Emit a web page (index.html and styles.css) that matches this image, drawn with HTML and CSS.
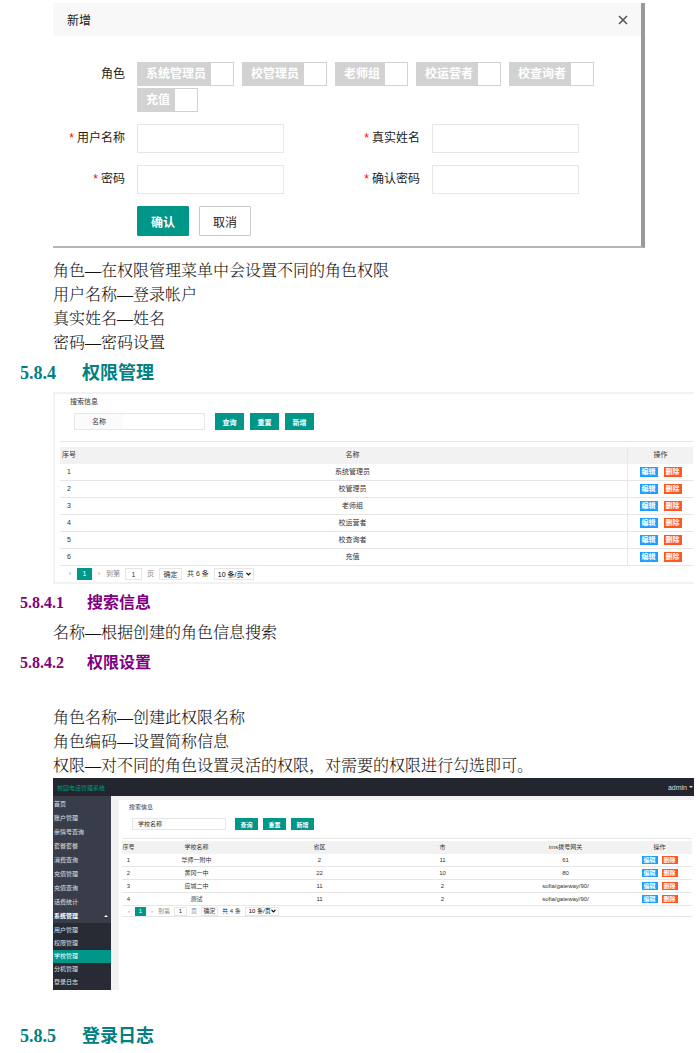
FILE: index.html
```html
<!DOCTYPE html>
<html lang="zh-CN">
<head>
    <meta charset="UTF-8">
    <meta name="viewport" content="width=device-width, initial-scale=1.0">
    <title>权限管理</title>
    <link rel="stylesheet" href="styles.css">
</head>
<body>
<main class="doc">

    <!-- 新增用户 -->
    <section class="dialog">
        <header class="dialog-title">
            <span>新增</span>
            <button class="dialog-close" type="button" aria-label="关闭">
                <svg width="10" height="10" viewBox="0 0 10 10"><path d="M1 1L9 9M9 1L1 9" stroke="#555" stroke-width="1.6" fill="none"/></svg>
            </button>
        </header>
        <form class="dialog-form">
            <span class="form-label">角色</span>
            <div class="switches">
                <label class="switch"><span>系统管理员</span><input type="checkbox"></label>
                <label class="switch"><span>校管理员</span><input type="checkbox"></label>
                <label class="switch"><span>老师组</span><input type="checkbox"></label>
                <label class="switch"><span>校运营者</span><input type="checkbox"></label>
                <label class="switch"><span>校查询者</span><input type="checkbox"></label>
                <label class="switch"><span>充值</span><input type="checkbox"></label>
            </div>
            <label class="form-label required" for="username">用户名称</label>
            <input class="form-input" id="username" type="text">
            <label class="form-label required" for="realname">真实姓名</label>
            <input class="form-input" id="realname" type="text">
            <label class="form-label required" for="pwd">密码</label>
            <input class="form-input" id="pwd" type="password">
            <label class="form-label required" for="pwd2">确认密码</label>
            <input class="form-input" id="pwd2" type="password">
            <div class="form-buttons">
                <button class="btn-ok" type="button">确认</button>
                <button class="btn-cancel" type="button">取消</button>
            </div>
        </form>
    </section>

    <div class="text text-first">
        <p>角色—在权限管理菜单中会设置不同的角色权限</p>
        <p>用户名称—登录帐户</p>
        <p>真实姓名—姓名</p>
        <p>密码—密码设置</p>
    </div>

    <h2><span class="num">5.8.4</span>权限管理</h2>

    <!-- 权限列表 -->
    <section class="panel">
        <div class="legend">搜索信息</div>
        <form class="search">
            <div class="search-box">
                <label for="role-name">名称</label>
                <input id="role-name" type="text">
            </div>
            <button type="button">查询</button>
            <button type="button">重置</button>
            <button type="button">新增</button>
        </form>
        <table class="grid">
            <thead>
                <tr><th class="col-no">序号</th><th>名称</th><th class="col-op">操作</th></tr>
            </thead>
            <tbody>
                <tr><td>1</td><td>系统管理员</td><td><button class="edit" type="button">编辑</button><button class="del" type="button">删除</button></td></tr>
                <tr><td>2</td><td>校管理员</td><td><button class="edit" type="button">编辑</button><button class="del" type="button">删除</button></td></tr>
                <tr><td>3</td><td>老师组</td><td><button class="edit" type="button">编辑</button><button class="del" type="button">删除</button></td></tr>
                <tr><td>4</td><td>校运营者</td><td><button class="edit" type="button">编辑</button><button class="del" type="button">删除</button></td></tr>
                <tr><td>5</td><td>校查询者</td><td><button class="edit" type="button">编辑</button><button class="del" type="button">删除</button></td></tr>
                <tr><td>6</td><td>充值</td><td><button class="edit" type="button">编辑</button><button class="del" type="button">删除</button></td></tr>
            </tbody>
        </table>
        <div class="pager">
            <a class="arrow" href="#">‹</a>
            <span class="current">1</span>
            <a class="arrow" href="#">›</a>
            <label for="page-a">到第</label>
            <input id="page-a" type="text" value="1">
            <span class="unit">页</span>
            <button type="button">确定</button>
            <span class="total">共 6 条</span>
            <span class="page-size">
                <select aria-label="每页条数"><option>10 条/页</option><option>20 条/页</option></select>
                <svg width="5" height="4" viewBox="0 0 5 4"><path d="M0.5 0.8L2.5 2.8L4.5 0.8" stroke="#000" stroke-width="1.2" fill="none"/></svg>
            </span>
        </div>
    </section>

    <h3><span class="num">5.8.4.1</span>搜索信息</h3>
    <div class="text">
        <p>名称—根据创建的角色信息搜索</p>
    </div>
    <h3><span class="num">5.8.4.2</span>权限设置</h3>
    <div class="text text-spaced">
        <p>角色名称—创建此权限名称</p>
        <p>角色编码—设置简称信息</p>
        <p>权限—对不同的角色设置灵活的权限，对需要的权限进行勾选即可。</p>
    </div>

    <!-- 学校管理 -->
    <section class="admin">
        <header class="topbar">
            <span class="logo">校园电话管理系统</span>
            <a class="user" href="#">admin</a>
        </header>
        <div class="admin-body">
            <nav class="side">
                <a href="#">首页</a>
                <a href="#">账户管理</a>
                <a href="#">亲情号查询</a>
                <a href="#">套餐套餐</a>
                <a href="#">消费查询</a>
                <a href="#">充值管理</a>
                <a href="#">充值查询</a>
                <a href="#">话费统计</a>
                <a class="open" href="#">系统管理</a>
                <div class="sub">
                    <a href="#">用户管理</a>
                    <a href="#">权限管理</a>
                    <a class="active" href="#">学校管理</a>
                    <a href="#">分机管理</a>
                    <a href="#">登录日志</a>
                </div>
            </nav>
            <div class="card">
                <div class="legend">搜索信息</div>
                <form class="search">
                    <div class="search-box">
                        <label for="school-name">学校名称</label>
                        <input id="school-name" type="text">
                    </div>
                    <button type="button">查询</button>
                    <button type="button">重置</button>
                    <button type="button">新增</button>
                </form>
                <table class="grid">
                    <thead>
                        <tr><th class="col-no">序号</th><th>学校名称</th><th>省区</th><th>市</th><th>ims拨号网关</th><th class="col-op">操作</th></tr>
                    </thead>
                    <tbody>
                        <tr><td>1</td><td>华师一附中</td><td>2</td><td>11</td><td>61</td><td><button class="edit" type="button">编辑</button><button class="del" type="button">删除</button></td></tr>
                        <tr><td>2</td><td>黄冈一中</td><td>22</td><td>10</td><td>80</td><td><button class="edit" type="button">编辑</button><button class="del" type="button">删除</button></td></tr>
                        <tr><td>3</td><td>应城二中</td><td>11</td><td>2</td><td>sofia/gateway/90/</td><td><button class="edit" type="button">编辑</button><button class="del" type="button">删除</button></td></tr>
                        <tr><td>4</td><td>测试</td><td>11</td><td>2</td><td>sofia/gateway/90/</td><td><button class="edit" type="button">编辑</button><button class="del" type="button">删除</button></td></tr>
                    </tbody>
                </table>
                <div class="pager">
                    <a class="arrow" href="#">‹</a>
                    <span class="current">1</span>
                    <a class="arrow" href="#">›</a>
                    <label for="page-b">到第</label>
                    <input id="page-b" type="text" value="1">
                    <span class="unit">页</span>
                    <button type="button">确定</button>
                    <span class="total">共 4 条</span>
                    <span class="page-size">
                        <select aria-label="每页条数"><option>10 条/页</option><option>20 条/页</option></select>
                        <svg width="5" height="4" viewBox="0 0 5 4"><path d="M0.5 0.8L2.5 2.8L4.5 0.8" stroke="#000" stroke-width="1.2" fill="none"/></svg>
                    </span>
                </div>
            </div>
        </div>
    </section>

    <h2 class="last"><span class="num">5.8.5</span>登录日志</h2>
</main>
</body>
</html>
```
FILE: styles.css
```css
:root {
    --teal: #009688;
    --blue: #1e9fff;
    --red: #ff5722;
    --line: #e6e6e6;
    --ui: "Liberation Sans", "Noto Sans CJK SC", sans-serif;
}

* {
    box-sizing: border-box;
}

body {
    margin: 0;
    background: #fff;
    color: #333;
    font-family: var(--ui);
}

a {
    color: inherit;
    text-decoration: none;
}

button, input, select {
    margin: 0;
    padding: 0;
    border: 0;
    border-radius: 0;
    font-family: inherit;
    font-size: inherit;
    color: inherit;
    background: none;
}

.doc {
    padding: 3px 6px 0 20px;
}

/* document text */
.text {
    margin: 6px 0 6px 33px;
    color: #111;
    font-family: "Liberation Serif", "Noto Serif CJK SC", "Noto Sans CJK SC", serif;
    font-size: 16px;
    font-weight: 300;
    line-height: 24px;
}

.text p { margin: 0; }
.text-first { margin: 11px 0 0 33px; }
.text-spaced { margin: 31px 0 0 33px; }

h2, h3 {
    display: flex;
    margin: 0;
    font-family: "Liberation Serif", "Noto Sans CJK SC", serif;
    font-weight: bold;
}

h2 {
    font-size: 18px;
    line-height: 37px;
    color: #008080;
}

h3 {
    font-size: 16px;
    line-height: 24px;
    color: #800080;
}

h2 .num { width: 62px; }
h3 .num { width: 67px; }
h2.last { margin-top: 28px; }

/* dialog */
.dialog {
    margin: 0 49px 0 33px;
    border-right: 4px solid #999;
    border-bottom: 2px solid #b5b5b5;
    font-size: 12px;
    color: #222;
}

.dialog-title {
    display: flex;
    justify-content: space-between;
    align-items: center;
    height: 33px;
    padding: 0 13px 0 14px;
    background: #f8f8f8;
}

.dialog-close {
    display: flex;
}

.dialog-form {
    display: grid;
    grid-template-columns: 72px 1fr 124px 1fr;
    column-gap: 12px;
    row-gap: 12px;
    padding: 26px 62px 10px 0;
}

.form-label {
    line-height: 29px;
    text-align: right;
}

.dialog-form .form-label:first-child {
    line-height: 24px;
}

.required::before {
    content: "*";
    margin-right: 3px;
    color: #f00;
}

.form-input {
    width: 100%;
    height: 29px;
    padding: 0 6px;
    border: 1px solid var(--line);
}

.switches {
    grid-column: 2 / -1;
    display: flex;
    flex-wrap: wrap;
    gap: 2px 8px;
    margin-right: -20px;
}

.switch {
    display: flex;
    height: 24px;
    border: 1px solid #d2d2d2;
    background: #d2d2d2;
    color: #fff;
    font-weight: bold;
    line-height: 22px;
}

.switch span {
    padding: 0 5px 0 8px;
}

.switch input {
    appearance: none;
    width: 22px;
    height: 22px;
    background: #fff;
}

.form-buttons {
    grid-column: 2 / -1;
    display: flex;
    gap: 10px;
}

.form-buttons button {
    height: 30px;
    padding: 0 13px;
    border: 1px solid #c9c9c9;
    border-radius: 1px;
}

.form-buttons .btn-ok {
    border-color: var(--teal);
    background: var(--teal);
    color: #fff;
    font-weight: bold;
}

/* list panel */
.panel {
    margin: 0 0 7px 33px;
    padding: 3px 1px 0 5px;
    border: 2px solid #f2f2f2;
    border-right: 0;
    font-size: 7px;
}

.legend {
    padding-left: 10px;
    line-height: 10px;
}

.search {
    display: flex;
    gap: 6px;
    margin-bottom: 5px;
    padding: 6px 0 11px 14px;
    border-bottom: 1px solid var(--line);
}

.search-box {
    display: flex;
    width: 131px;
    margin-right: 4px;
    border: 1px solid var(--line);
}

.search-box label {
    width: 48px;
    background: #fbfbfb;
    line-height: 15px;
    text-align: center;
}

.search-box input {
    flex: 1;
    min-width: 0;
}

.search button {
    width: 29px;
    height: 17px;
    background: var(--teal);
    color: #fff;
    font-weight: bold;
}

.grid {
    width: 100%;
    border-collapse: separate;
    border-spacing: 0;
    table-layout: fixed;
    text-align: center;
}

.grid th, .grid td {
    height: 17px;
    padding: 0;
    border-bottom: 1px solid var(--line);
    font-weight: normal;
    line-height: 10px;
    white-space: nowrap;
}

.grid th {
    background: #f2f2f2;
    border-color: #f2f2f2;
}

.grid .col-no { width: 18px; }
.grid .col-op { width: 66px; }

.panel .grid th:last-child,
.panel .grid td:last-child {
    border-left: 1px solid var(--line);
}

.grid button {
    width: 18px;
    height: 10px;
    color: #fff;
    font-weight: bold;
    line-height: 10px;
    vertical-align: middle;
}

.grid .edit { background: var(--blue); }
.grid .del { margin-left: 6px; background: var(--red); }

.pager {
    display: flex;
    align-items: center;
    gap: 5px;
    height: 16px;
    padding-left: 8px;
    line-height: 12px;
    white-space: nowrap;
}

.pager .arrow {
    width: 4px;
    color: #999;
    text-align: center;
}

.pager .current {
    width: 15px;
    background: var(--teal);
    color: #fff;
    text-align: center;
}

.pager label, .pager .unit { color: #888; }

.pager input {
    width: 17px;
    height: 12px;
    border: 1px solid var(--line);
    text-align: center;
}

.pager button {
    width: 23px;
    height: 12px;
    border: 1px solid var(--line);
}

.page-size {
    display: grid;
    align-items: center;
}

.page-size select,
.page-size svg {
    grid-area: 1 / 1;
}

.page-size svg {
    justify-self: end;
    margin-right: 3px;
    pointer-events: none;
}

.pager select {
    appearance: none;
    width: 40px;
    height: 12px;
    padding-left: 3px;
    border: 1px solid var(--line);
    color: #000;
}

/* admin page */
.admin {
    margin-left: 33px;
    font-size: 6px;
}

.topbar {
    display: flex;
    justify-content: space-between;
    align-items: center;
    height: 18px;
    padding: 0 1px 0 4px;
    background: #23262e;
}

.logo { color: var(--teal); }

.user {
    display: flex;
    align-items: center;
    gap: 2px;
    color: #ddd;
    font-size: 7px;
}

.user::after, .open::after {
    content: "";
    border: 2px solid transparent;
}

.user::after {
    border-top-color: #ddd;
    border-bottom: 0;
}

.open::after {
    border-bottom-color: #fff;
    border-top: 0;
}

.admin-body {
    display: flex;
    background: #f2f2f2;
}

.side {
    width: 58px;
    padding-top: 1px;
    background: #393d49;
    color: #e0e0e0;
}

.side a {
    display: block;
    padding-left: 1px;
    line-height: 14px;
}

.side .open {
    display: flex;
    justify-content: space-between;
    align-items: center;
    padding-right: 3px;
    color: #fff;
    font-weight: bold;
}

.sub {
    padding: 1px 0;
    background: #282b33;
}

.side .sub a { line-height: 13px; }

.sub .active {
    background: var(--teal);
    color: #fff;
}

.card {
    flex: 1;
    margin: 4px 0 0 8px;
    padding: 2px 2px 0 3px;
    background: #fff;
}

.card .legend {
    padding-left: 7px;
}

.card .search {
    gap: 5px;
    margin-bottom: 2px;
    padding: 6px 0 8px 10px;
}

.card .search-box { width: 94px; }

.card .search-box label {
    width: 34px;
    line-height: 10px;
}

.card .search button {
    width: 23px;
    height: 12px;
}

.card .grid th, .card .grid td { height: 13px; }
.card .grid .col-no { width: 13px; }
.card .grid .col-op { width: 65px; }

.card .grid button {
    width: 16px;
    height: 8px;
    line-height: 8px;
}

.card .grid .del { margin-left: 4px; }

.card .pager {
    gap: 4px;
    height: 11px;
    padding-left: 5px;
    border-bottom: 1px solid var(--line);
    line-height: 9px;
}

.card .pager .current { width: 11px; }

.card .pager input {
    width: 13px;
    height: 9px;
}

.card .pager button {
    width: 17px;
    height: 9px;
    line-height: 7px;
}

.card .pager select {
    width: 34px;
    height: 9px;
}
```
